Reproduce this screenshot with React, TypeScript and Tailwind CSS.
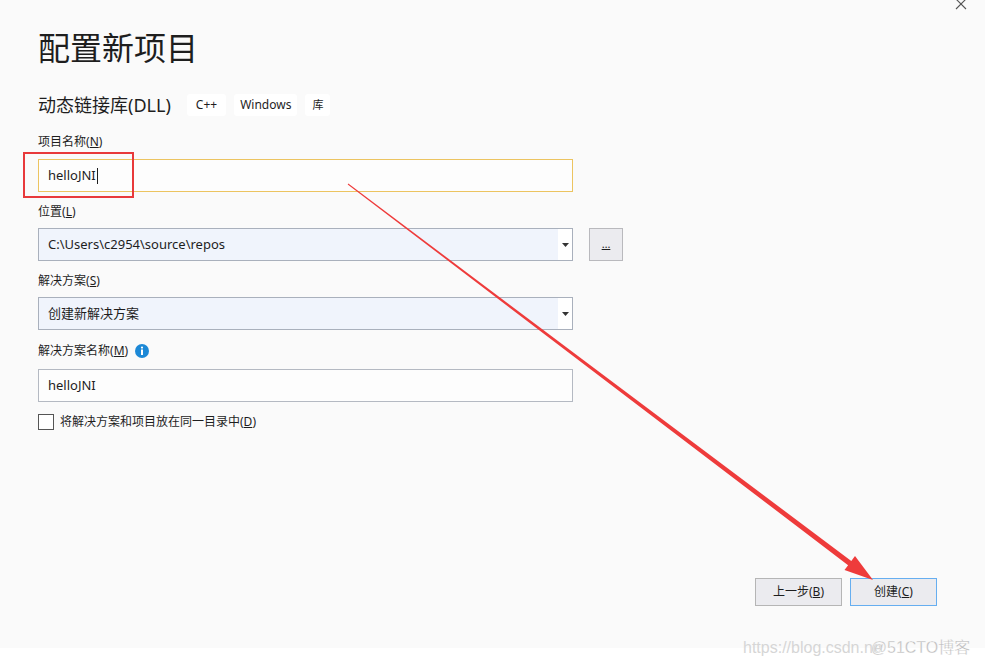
import React from 'react';

const font = { fontFamily: '"Noto Sans", "Noto Sans CJK SC", sans-serif' };

const Label = ({ text, acc, children }: { text: string; acc: string; children?: React.ReactNode }) => (
  <div className="flex items-center h-[16px] text-[12px] leading-[16px] text-[#1e1e1e]">
    <span>
      {text}(<span className="underline">{acc}</span>)
    </span>
    {children}
  </div>
);

const Combo = ({ value }: { value: string }) => (
  <div className="flex w-[535px] h-[33px] border border-[#a9b0bc] bg-[#f0f4fc]">
    <div className="flex-1 flex items-center pl-[9px] text-[13px] text-[#1e1e1e]">{value}</div>
    <div className="w-[14px] bg-white flex items-center justify-center">
      <svg width="7" height="4" viewBox="0 0 7 4">
        <path d="M0 0 H7 L3.5 4 Z" fill="#333" />
      </svg>
    </div>
  </div>
);

export default function App() {
  return (
    <div className="relative w-[985px] h-[668px] bg-white overflow-hidden" style={font}>
      <div className="h-[648px] bg-[#fafafa] flex flex-col pl-[38px] pt-[28px]">
        <h1 className="text-[32px] leading-[40px] text-[#1e1e1e] font-normal">配置新项目</h1>

        <div className="flex items-center mt-[26px] h-[22px]">
          <span className="text-[18px] leading-[22px] text-[#1e1e1e]">动态链接库(DLL)</span>
          <div className="flex gap-[8px] ml-[16px]">
            <span className="h-[22px] px-[9px] flex items-center bg-white rounded-[3px] text-[12px] text-[#1e1e1e]">C++</span>
            <span className="h-[22px] px-[6px] flex items-center bg-white rounded-[3px] text-[12px] text-[#1e1e1e]">Windows</span>
            <span className="h-[22px] px-[7px] flex items-center bg-white rounded-[3px] text-[11px] text-[#1e1e1e]">库</span>
          </div>
        </div>

        <div className="mt-[18px]">
          <Label text="项目名称" acc="N" />
        </div>
        <div className="mt-[9px] w-[535px] h-[33px] border border-[#ecc460] bg-[#fdfdfd] flex items-center pl-[9px] text-[13px] text-[#1e1e1e]">
          helloJNI
          <span className="inline-block w-px h-[16px] bg-[#1e1e1e] ml-[1px]" />
        </div>

        <div className="mt-[12px]">
          <Label text="位置" acc="L" />
        </div>
        <div className="mt-[8px] flex items-center gap-[16px]">
          <Combo value="C:\Users\c2954\source\repos" />
          <div className="w-[34px] h-[33px] border border-[#b9b9bd] bg-[#ebebef] flex items-center justify-center text-[11px] text-[#1e1e1e]">
            <span className="underline">…</span>
          </div>
        </div>

        <div className="mt-[12px]">
          <Label text="解决方案" acc="S" />
        </div>
        <div className="mt-[8px]">
          <Combo value="创建新解决方案" />
        </div>

        <div className="mt-[13px]">
          <Label text="解决方案名称" acc="M">
            <svg className="ml-[7px]" width="14" height="14" viewBox="0 0 14 14">
              <circle cx="7" cy="7" r="7" fill="#1c88d6" />
              <rect x="6" y="5.5" width="2" height="5.5" fill="#fff" />
              <circle cx="7" cy="3.6" r="1.1" fill="#fff" />
            </svg>
          </Label>
        </div>
        <div className="mt-[10px] w-[535px] h-[33px] border border-[#b4b9c2] bg-[#fdfdfd] flex items-center pl-[9px] text-[13px] text-[#1e1e1e]">
          helloJNI
        </div>

        <div className="mt-[12px] flex items-center h-[16px]">
          <div className="w-[16px] h-[16px] border border-[#555] bg-white" />
          <span className="ml-[6px] text-[12px] text-[#1e1e1e]">
            将解决方案和项目放在同一目录中(<span className="underline">D</span>)
          </span>
        </div>

        <div className="flex-1" />

        <div className="flex justify-end gap-[8px] pr-[48px] pb-[42px]">
          <button className="w-[87px] h-[28px] border border-[#b5b5b5] bg-[#ebebef] text-[12px] text-[#1e1e1e]">
            上一步(<span className="underline">B</span>)
          </button>
          <button className="w-[87px] h-[28px] border border-[#66aef0] bg-[#ebebef] text-[12px] text-[#1e1e1e]">
            创建(<span className="underline">C</span>)
          </button>
        </div>
      </div>

      {/* close button */}
      <svg className="absolute left-[955px] top-[-2px]" width="12" height="12" viewBox="0 0 12 12">
        <path d="M1 1 L11 11 M11 1 L1 11" stroke="#555" strokeWidth="1.1" />
      </svg>

      {/* annotation */}
      <div className="absolute left-[23px] top-[152px] w-[111px] h-[46px] border-2 border-[#e8393b]" />
      <svg className="absolute inset-0 pointer-events-none" width="985" height="668" viewBox="0 0 985 668">
        <polygon
          points="348.3,183.6 851.3,561 855,556 873,580 844.5,570 848.1,565.2 347.7,184.4"
          fill="#ee3b3b"
        />
      </svg>

      {/* watermark */}
      <div
        className="absolute left-[743px] top-[637px] whitespace-nowrap text-[16px] leading-[22px] text-[#d6d6d6] flex items-center"
        style={{ fontFamily: '"Liberation Sans", "Noto Sans CJK SC", sans-serif' }}
      >
        <span>https://blog.csdn.ne</span>
        <span className="ml-[-11px] text-[16px] text-[#bdbdbd] whitespace-nowrap" style={{ WebkitTextStroke: '0.3px #fff' }}>
          @51CTO博客
        </span>
      </div>
    </div>
  );
}
